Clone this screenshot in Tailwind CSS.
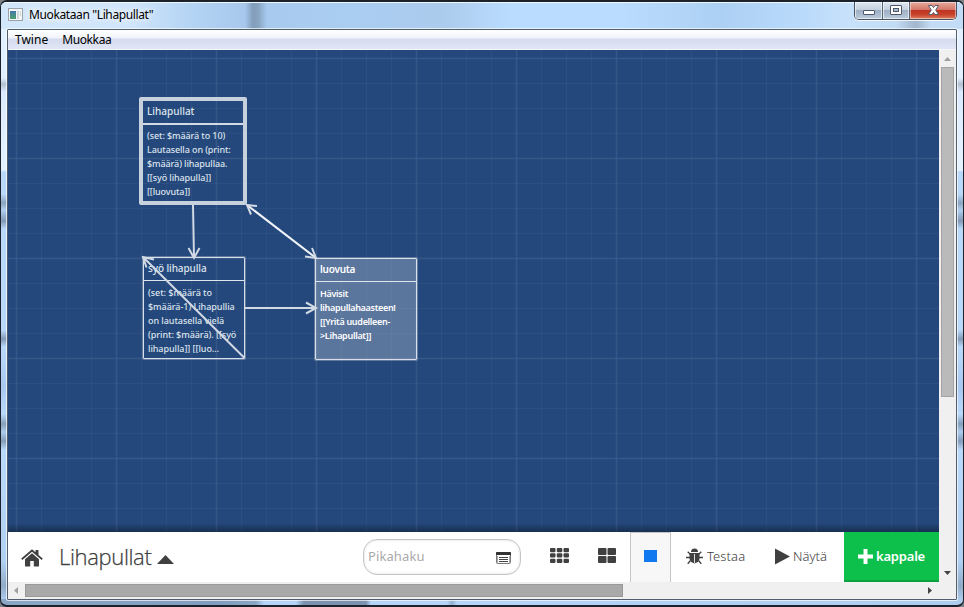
<!DOCTYPE html>
<html lang="fi">
<head>
<meta charset="utf-8">
<title>Muokataan "Lihapullat"</title>
<script src="https://cdn.jsdelivr.net/npm/@tailwindcss/browser@4"></script>
</head>
<body class="w-[964px] h-[607px] overflow-hidden bg-[#7c8288] font-['Noto_Sans','Open_Sans',sans-serif]">
<div class="w-[964px] h-[607px] rounded-[7px] border border-[#1b222b] border-t-2 border-b-2 overflow-hidden flex flex-col bg-[#b4d3f2] bg-[linear-gradient(90deg,#8ba5c4_35px,#839dc0_215px,#8ba5c4_255px,#b4d4f8_263px,#b4d4f8_295px,#7c92ae_303px,#7c92ae_365px,#b4d4f8_370px,#b4d4f8_446px,#94afcf_451px,#b4d4f8_456px,#aecdee_100%),linear-gradient(#e2f0ff_0,#e2f0ff_76px,#b3c0d0_82px,#dceaff_90px,#e4f2ff_168px,#b9d9fb_170px,#b9d9fb_192px,#8ba4be_201px,#b0cff0_208px,#8299b5_219px,#b9d9fb_227px,#b9d9fb_328px,#839ab5_337px,#b9d9fb_345px,#a9c8f0_385px,#b9d9fb_412px,#869fb9_422px,#acccee_430px,#849cb7_439px,#b9d9fb_448px,#b0d0f2_560px,#90abc8_584px,#b4d3f2_600px)] bg-[size:100%_6px,100%_100%] bg-[position:bottom,top] bg-no-repeat">
  <!-- title bar -->
  <header class="h-[27px] shrink-0 flex items-start pl-[7px] pr-[6px] border-t border-[#eff8ff] bg-[linear-gradient(90deg,#d3e7fa_0,#cfe5fb_130px,#b4d4f4_190px,#a7c8ec_244px,#819db9_252px,#86a3c0_257px,#a8caee_266px,#aacdf2_350px,#abcbec_440px,#badcfe_510px,#badcfe_620px,#acd0f3_720px,#b9dafb_800px,#c8e1fa_850px,#c3dcf5_895px,#a2b6cc_915px,#c3dcf5_930px,#c3dcf5_962px)]">
    <svg class="mt-[5px] w-[15px] h-[13px] shrink-0" viewBox="0 0 15 13">
      <defs><linearGradient id="ic" x2="0" y2="1"><stop offset="0" stop-color="#4479a8"/><stop offset="1" stop-color="#4ba06d"/></linearGradient></defs>
      <rect x=".5" y=".5" width="14" height="12" fill="#f3f5f6" stroke="#9ba4ac"/>
      <rect x="2" y="3" width="6" height="8" fill="url(#ic)"/><rect x="9" y="3" width="2" height="8" fill="#cfd8d8"/><rect x="12" y="3" width="1" height="5" fill="#c8dcd6"/>
    </svg>
    <h1 class="ml-[6px] mt-[3px] text-[12px] leading-[18px] tracking-[-0.38px] text-black whitespace-nowrap [text-shadow:0_0_6px_#fff,0_0_8px_#fff]">Muokataan "Lihapullat"</h1>
    <div class="ml-auto -mt-px flex h-[18px] w-[103px] rounded-b-[5px] border border-t-0 border-[#4a5461] overflow-hidden shadow-[0_1px_0_#ffffffcc]">
      <span class="w-[28px] border-r border-[#5b6674] bg-[linear-gradient(#dfe7f0_0,#c5d1df_45%,#9eb0c5_50%,#bccbdc_100%)] shadow-[inset_0_0_0_1px_#ffffff99]"><svg class="w-[27px] h-[17px]" viewBox="0 0 27 17"><rect x="8.5" y="8.5" width="11" height="4" rx=".5" fill="#fff" stroke="#4f5769"/></svg></span>
      <span class="w-[27px] border-r border-[#5b6674] bg-[linear-gradient(#dfe7f0_0,#c5d1df_45%,#9eb0c5_50%,#bccbdc_100%)] shadow-[inset_0_0_0_1px_#ffffff99]"><svg class="w-[26px] h-[17px]" viewBox="0 0 26 17"><rect x="7.5" y="3.5" width="11" height="9" rx=".5" fill="#fff" stroke="#4f5769"/><rect x="10.5" y="6.5" width="5" height="3" fill="#a9bbce" stroke="#4f5769"/></svg></span>
      <span class="w-[46px] bg-[linear-gradient(#e6aa9c_0,#d4786a_45%,#be3420_50%,#c9442c_75%,#dc8262_100%)] shadow-[inset_0_0_0_1px_#ffffff77]"><svg class="w-[46px] h-[17px]" viewBox="0 0 46 17"><path d="M18.500 3.500h3.500l1.500 2 1.500-2h3.500l-2.800 4.500 2.800 4.500h-3.500l-1.500-2-1.500 2h-3.500l2.800-4.500z" fill="#fff" stroke="#565a6b"/></svg></span>
    </div>
  </header>

  <div class="mx-[6px] w-[950px] h-[571px] shrink-0 border border-[#4f5d6c] rounded-[1px] bg-[#f0f0f0] flex flex-col shadow-[0_0_0_1px_#ffffffaa]">
    <nav class="h-[20px] shrink-0 flex items-center gap-[14px] pl-[7px] text-[12px] leading-[18px] text-black bg-[linear-gradient(#fff_0,#f0f3fa_8px,#d5dcee_9px,#dfe5f4_18px)] border-b border-[#f6f6f6]">
      <span>Twine</span><span class="tracking-[-0.38px]">Muokkaa</span>
    </nav>

    <div class="flex h-[532px] shrink-0">
      <div class="w-[931px] flex flex-col">
        <!-- story map -->
        <main class="relative h-[482px] overflow-hidden bg-[#24487c] text-white">
          <svg class="absolute inset-0 w-[931px] h-[482px]" viewBox="8 50 931 482">
            <defs>
              <pattern id="minor" x="16" y="58" width="25" height="25" patternUnits="userSpaceOnUse"><path d="M.5 0V25M0 .5H25" stroke="#fff" stroke-opacity=".035"/></pattern>
              <pattern id="major" x="15" y="57" width="100" height="100" patternUnits="userSpaceOnUse"><path d="M1.500 0V100M0 1.500H100" stroke="#fff" stroke-opacity=".045" stroke-width="2"/></pattern>
            </defs>
            <rect x="8" y="50" width="931" height="482" fill="url(#minor)"/><rect x="8" y="50" width="931" height="482" fill="url(#major)"/>
          </svg>

          <article class="absolute left-[131px] top-[47px] w-[108px] h-[108px] border-4 border-[#c8d1de] rounded-[2px] text-[#dce3ec] font-medium">
            <h2 class="h-[24px] border-b-2 border-[#d3dae5] pl-[4px] pt-[2px] text-[10px] leading-[16px]">Lihapullat</h2>
            <p class="pl-[4px] pt-[4px] text-[9px] leading-[14px] tracking-[-0.1px] whitespace-nowrap">(set: $määrä to 10)<br>Lautasella on (print:<br>$määrä) lihapullaa.<br>[[syö lihapulla]]<br>[[luovuta]]</p>
          </article>
          <article class="absolute left-[135px] top-[207px] w-[102px] h-[102px] border border-[#d8dfe8] rounded-[1px] text-[#dce3ec] font-medium shadow-[0_0_0_1px_#d8dfe855]">
            <h2 class="h-[23px] border-b border-[#e0e6ed] pl-[4px] pt-[2px] text-[10px] leading-[16px] tracking-[-0.1px]">syö lihapulla</h2>
            <p class="pl-[4px] pt-[5px] text-[9px] leading-[14px] tracking-[-0.05px] whitespace-nowrap">(set: $määrä to<br>$määrä-1) Lihapullia<br>on lautasella vielä<br>(print: $määrä). [[syö<br>lihapulla]] [[luo…</p>
          </article>
          <article class="absolute left-[307px] top-[208px] w-[102px] h-[102px] border border-[#d8dfe8] rounded-[1px] bg-white/25 text-white font-semibold shadow-[0_0_0_1px_#d8dfe855]">
            <h2 class="h-[23px] border-b border-[#e0e6ed] pl-[4px] pt-[2px] text-[10px] leading-[16px] tracking-[-0.25px]">luovuta</h2>
            <p class="pl-[4px] pt-[5px] text-[9px] leading-[14px] tracking-[-0.3px] whitespace-nowrap">Hävisit<br>lihapullahaasteen!<br>[[Yritä uudelleen-<br>&gt;Lihapullat]]</p>
          </article>

          <svg class="absolute inset-0 w-[931px] h-[482px]" viewBox="8 50 931 482" fill="none" stroke="#d1d9e4" stroke-width="2">
            <path d="M193 205L194 258M188.500 248L194 258 199.500 248"/>
            <path d="M245 308H316M306 302.500L316 308 306 313.500"/>
            <path d="M244.500 358L143 257M146.500 267.500L143 257 154 259.500"/>
            <path d="M247 205L316 258" stroke="#f1f4f8"/>
            <path d="M251 214.500L247 205 257 206M312 248L316 258 305 256.500"/>
          </svg>
          <div class="absolute inset-x-0 bottom-0 h-[9px] bg-linear-to-b from-transparent to-black/35"></div>
        </main>

        <!-- story toolbar -->
        <footer class="h-[50px] shrink-0 bg-white flex items-center text-[#404040]">
          <svg class="ml-[13px] mt-[2px] w-[22px] h-[18px]" viewBox="0 0 22 18" fill="#404040"><path d="M11 4.200L18 10.200V17.500H12.800V12H9.200V17.500H4V10.200zM11 .3L14.500 3.300V1H17.500V5.900L21.800 9.600 20.700 10.900 11 2.700 1.300 10.900.2 9.600z"/></svg>
          <div class="ml-[16px] -mt-[2px] w-[93px] text-[22px] leading-[30px] font-light font-['Open_Sans','Noto_Sans',sans-serif] tracking-[-0.35px] whitespace-nowrap [-webkit-text-stroke:0.25px_#404040]">Lihapullat</div>
          <svg class="ml-[5px] mt-[4px] w-[17px] h-[9px]" viewBox="0 0 17 9"><path d="M0 9L8.500 0 17 9z" fill="#404040"/></svg>
          <div class="ml-[189px] w-[158px] h-[36px] rounded-[14px] border border-[#c5c5c5] shadow-[inset_0_0_3px_#ddd] flex items-center justify-between pl-[4px] pr-[9px]">
            <span class="text-[13px] tracking-[0.1px] text-[#a9a9a9]">Pikahaku</span>
            <svg class="w-[15px] h-[12px] mt-[1px]" viewBox="0 0 15 12"><rect x=".5" y=".5" width="14" height="11" rx="1" fill="#fff" stroke="#777"/><path d="M0 1.500a1 1 0 0 1 1-1.500h13a1 1 0 0 1 1 1.500V3H0z" fill="#333"/><path d="M3 5.500H12M3 7.500H12M3 9.500H12" stroke="#444"/><path d="M1.500 4V11M13.500 4V11" stroke="#aaa"/></svg>
          </div>
          <svg class="ml-[29px] -mt-[3px] w-[19px] h-[15px]" viewBox="0 0 19 15" fill="#404040"><g id="row"><rect width="5.500" height="4.300" rx="1"/><rect x="6.800" width="5.500" height="4.300" rx="1"/><rect x="13.500" width="5.500" height="4.300" rx="1"/></g><use href="#row" y="5.300"/><use href="#row" y="10.700"/></svg>
          <svg class="ml-[29px] -mt-[3px] w-[18px] h-[15px]" viewBox="0 0 18 15" fill="#404040"><rect width="8.500" height="7" rx="1"/><rect x="9.500" width="8.500" height="7" rx="1"/><rect y="8" width="8.500" height="7" rx="1"/><rect x="9.500" y="8" width="8.500" height="7" rx="1"/></svg>
          <div class="ml-[14px] w-[41px] h-[50px] border-x border-t border-[#c5c5c5] bg-[#f7f7f7] flex justify-center pt-[17px]"><span class="w-[13px] h-[12px] bg-[#1079ef]"></span></div>
          <svg class="ml-[15px] -mt-[2px] w-[17px] h-[17px]" viewBox="0 0 17 17"><path d="M5 4a3.500 3.500 0 0 1 7 0z" fill="#404040"/><path d="M3.500 5H13.500V11Q12.500 14.500 8.500 15.500 4.500 14.500 3.500 11z" fill="#404040"/><path d="M8.500 6V15" stroke="#ddd"/><path d="M4.500 6.500L1.700 3.700M12.500 6.500L15.300 3.700M0 9.500H4M13 9.500H17M4.500 12.500L1.700 15.700M12.500 12.500L15.300 15.700" stroke="#404040" stroke-width="1.300" fill="none"/></svg>
          <span class="ml-[4px] w-[41px] text-[13px] tracking-[0.1px] font-[350] whitespace-nowrap">Testaa</span>
          <svg class="ml-[27px] -mt-[1px] w-[15px] h-[17px]" viewBox="0 0 15 17"><path d="M0 .5L15 8.500 0 16.500z" fill="#404040"/></svg>
          <span class="ml-[3px] w-[36px] text-[13px] font-[350] whitespace-nowrap">Näytä</span>
          <button class="ml-auto w-[95px] h-[50px] bg-[#0dbf4b] shadow-[inset_0_-2px_0_#0aa13e] flex items-center pl-[14px] text-white text-[13px] font-semibold">
            <svg class="w-[15px] h-[15px] -mt-[2px] shrink-0" viewBox="0 0 15 15"><path d="M5.500 0h4v5.500H15v4H9.500V15h-4V9.500H0v-4h5.500z" fill="#fff"/></svg>
            <span class="ml-[3px] tracking-[-0.2px]">kappale</span>
          </button>
        </footer>
      </div>
      <!-- vertical scrollbar -->
      <div class="w-[17px] flex flex-col items-center bg-[#f0f0f0]">
        <svg class="w-[17px] h-[17px]" viewBox="0 0 17 17"><path d="M5 11L8.500 7 12 11z" fill="#a0a0a0"/></svg>
        <div class="w-[13px] h-[330px] border border-[#a3a3a3] bg-[#bababa]"></div>
        <svg class="mt-auto w-[17px] h-[17px]" viewBox="0 0 17 17"><path d="M5 6L8.500 10 12 6z" fill="#444"/></svg>
      </div>
    </div>
    <!-- horizontal scrollbar -->
    <div class="h-[17px] w-[931px] flex items-center bg-[#f0f0f0]">
      <svg class="w-[17px] h-[17px]" viewBox="0 0 17 17"><path d="M10 5L6 8.500 10 12z" fill="#a0a0a0"/></svg>
      <div class="w-[598px] h-[13px] border border-[#999] bg-[#a9a9a9]"></div>
      <svg class="ml-auto w-[17px] h-[17px]" viewBox="0 0 17 17"><path d="M6 5L10 8.500 6 12z" fill="#444"/></svg>
    </div>
  </div>
</div>
</body>
</html>
